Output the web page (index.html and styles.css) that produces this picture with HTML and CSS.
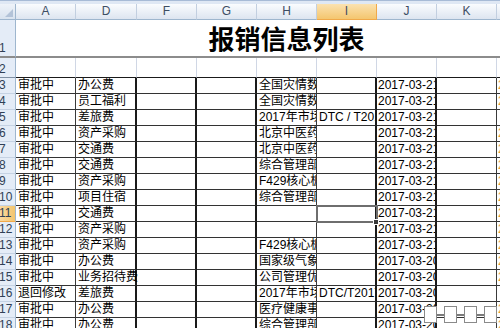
FILE: index.html
```html
<!DOCTYPE html>
<html>
<head>
<meta charset="utf-8">
<link rel="stylesheet" href="styles.css">
</head>
<body>
<div class="sheet">
  <div class="topbar"></div>
  <div class="row colhead">
    <div class="corner"><span class="tri"></span></div>
    <div class="hc">A</div><div class="hc">D</div><div class="hc">F</div><div class="hc">G</div><div class="hc">H</div><div class="hc hsel">I</div><div class="hc">J</div><div class="hc">K</div><div class="hc">L</div>
  </div>
  <div class="row r1">
    <div class="rh rhb">1</div>
    <div class="title">报销信息列表</div>
  </div>
  <div class="row r2">
    <div class="rh rhb">2</div>
    <div class="g"></div><div class="g"></div><div class="g"></div><div class="g"></div><div class="g"></div><div class="g"></div><div class="g"></div><div class="g"></div><div class="g"></div>
  </div>

  <div class="row d"><div class="rh">3</div><div class="c">审批中</div><div class="c tk">办公费</div><div class="c tk"></div><div class="c tk"></div><div class="c">全国灾情数据</div><div class="c tk"></div><div class="c tk dt">2017-03-21</div><div class="c"></div><div class="c o">2</div></div>
  <div class="row d"><div class="rh">4</div><div class="c">审批中</div><div class="c tk">员工福利</div><div class="c tk"></div><div class="c tk"></div><div class="c">全国灾情数据</div><div class="c tk"></div><div class="c tk dt">2017-03-21</div><div class="c"></div><div class="c o">2</div></div>
  <div class="row d"><div class="rh">5</div><div class="c">审批中</div><div class="c tk">差旅费</div><div class="c tk"></div><div class="c tk"></div><div class="c">2017年市场部</div><div class="c tk">DTC / T2017</div><div class="c tk dt">2017-03-21</div><div class="c"></div><div class="c o"></div></div>
  <div class="row d"><div class="rh">6</div><div class="c">审批中</div><div class="c tk">资产采购</div><div class="c tk"></div><div class="c tk"></div><div class="c">北京中医药</div><div class="c tk"></div><div class="c tk dt">2017-03-21</div><div class="c"></div><div class="c o">2</div></div>
  <div class="row d"><div class="rh">7</div><div class="c">审批中</div><div class="c tk">交通费</div><div class="c tk"></div><div class="c tk"></div><div class="c">北京中医药</div><div class="c tk"></div><div class="c tk dt">2017-03-21</div><div class="c"></div><div class="c o">2</div></div>
  <div class="row d"><div class="rh">8</div><div class="c">审批中</div><div class="c tk">交通费</div><div class="c tk"></div><div class="c tk"></div><div class="c">综合管理部</div><div class="c tk"></div><div class="c tk dt">2017-03-21</div><div class="c"></div><div class="c o">2</div></div>
  <div class="row d"><div class="rh">9</div><div class="c">审批中</div><div class="c tk">资产采购</div><div class="c tk"></div><div class="c tk"></div><div class="c">F429核心板</div><div class="c tk"></div><div class="c tk dt">2017-03-21</div><div class="c"></div><div class="c o">2</div></div>
  <div class="row d"><div class="rh">10</div><div class="c">审批中</div><div class="c tk">项目住宿</div><div class="c tk"></div><div class="c tk"></div><div class="c">综合管理部</div><div class="c tk"></div><div class="c tk dt">2017-03-21</div><div class="c"></div><div class="c o">2</div></div>
  <div class="row d"><div class="rh rsel">11</div><div class="c">审批中</div><div class="c tk">交通费</div><div class="c tk"></div><div class="c tk"></div><div class="c"></div><div class="c tk sel"></div><div class="c tk dt">2017-03-21</div><div class="c"></div><div class="c o">2</div></div>
  <div class="row d"><div class="rh">12</div><div class="c">审批中</div><div class="c tk">资产采购</div><div class="c tk"></div><div class="c tk"></div><div class="c"></div><div class="c tk"></div><div class="c tk dt">2017-03-21</div><div class="c"></div><div class="c o">2</div></div>
  <div class="row d"><div class="rh">13</div><div class="c">审批中</div><div class="c tk">资产采购</div><div class="c tk"></div><div class="c tk"></div><div class="c">F429核心板</div><div class="c tk"></div><div class="c tk dt">2017-03-21</div><div class="c"></div><div class="c o">2</div></div>
  <div class="row d"><div class="rh">14</div><div class="c">审批中</div><div class="c tk">办公费</div><div class="c tk"></div><div class="c tk"></div><div class="c">国家级气象</div><div class="c tk"></div><div class="c tk dt">2017-03-20</div><div class="c"></div><div class="c o">2</div></div>
  <div class="row d"><div class="rh">15</div><div class="c">审批中</div><div class="c tk ov">业务招待费</div><div class="c tk"></div><div class="c tk"></div><div class="c">公司管理优化</div><div class="c tk"></div><div class="c tk dt">2017-03-20</div><div class="c"></div><div class="c o">2</div></div>
  <div class="row d"><div class="rh">16</div><div class="c">退回修改</div><div class="c tk">差旅费</div><div class="c tk"></div><div class="c tk"></div><div class="c">2017年市场部</div><div class="c tk">DTC/T2017</div><div class="c tk dt">2017-03-20</div><div class="c"></div><div class="c o"></div></div>
  <div class="row d"><div class="rh">17</div><div class="c">审批中</div><div class="c tk">办公费</div><div class="c tk"></div><div class="c tk"></div><div class="c">医疗健康事业</div><div class="c tk"></div><div class="c tk dt">2017-03-20</div><div class="c"></div><div class="c o">2</div></div>
  <div class="row d"><div class="rh">18</div><div class="c">审批中</div><div class="c tk">办公费</div><div class="c tk"></div><div class="c tk"></div><div class="c">综合管理部</div><div class="c tk"></div><div class="c tk dt">2017-03-20</div><div class="c"></div><div class="c o">2</div></div>
</div>
<div class="ovl">
  <span class="sq"></span><span class="sq"></span><span class="sq"></span><span class="sq"></span>
</div>
</body>
</html>
```
FILE: styles.css
```css
html, body {
  margin: 0;
  padding: 0;
}
body {
  width: 500px;
  height: 328px;
  overflow: hidden;
  background: #fff;
  position: relative;
  font-family: "Liberation Sans", "Noto Sans CJK SC", sans-serif;
  color: #000;
}
.sheet {
  width: 557px;
}
.topbar {
  height: 4px;
  background: linear-gradient(#a7bbd6 0 1px, #dfe8f4 1px);
}
.row {
  display: grid;
  grid-template-columns: 16px 60px 61px 60px 60px 60px 60px 60px 60px 60px;
}
.row > div {
  box-sizing: border-box;
  min-width: 0;
}
.colhead {
  height: 16px;
}
.corner {
  background: linear-gradient(#eef3f9, #d9e3ef);
  border-right: 1px solid #9eb6ce;
  border-bottom: 1px solid #9eb6ce;
  position: relative;
}
.tri {
  position: absolute;
  right: 2px;
  bottom: 2px;
  width: 0;
  height: 0;
  border-left: 8px solid transparent;
  border-bottom: 8px solid #b3c3d8;
}
.hc {
  background: linear-gradient(#fafcfe, #dde5f0);
  border-right: 1px solid #c2cfe0;
  border-bottom: 1px solid #9eb6ce;
  font-size: 12px;
  line-height: 15px;
  text-align: center;
  color: #3c4d63;
}
.hc.hsel {
  background: linear-gradient(#fbe2b0, #f4c66f);
  border-right-color: #f0a94a;
  border-bottom-color: #f0a94a;
}
.rh {
  background: #e4ecf7;
  border-right: 1px solid #9eb6ce;
  border-bottom: 1px solid #c5d2e3;
  font-size: 12px;
  line-height: 15px;
  text-indent: -1px;
  color: #2f3f55;
  white-space: nowrap;
  overflow: hidden;
}
.rhb {
  display: flex;
  align-items: flex-end;
}
.rh.rsel {
  background: linear-gradient(90deg, #f9d8a0, #f3c56d);
  border-bottom-color: #f0a94a;
}
.r1 {
  height: 38px;
}
.r1 .rh {
  border-bottom: 2px solid #8c8c8c;
}
.title {
  grid-column: 2 / 11;
  border-bottom: 2px solid #8c8c8c;
  display: flex;
  align-items: center;
  justify-content: center;
  font-family: "Noto Sans CJK SC", sans-serif;
  font-weight: bold;
  font-size: 26px;
  line-height: 30px;
  padding-bottom: 1px;
}
.r2 {
  height: 20px;
}
.r2 .rh {
  border-bottom: 1px solid #7f8fa3;
}
.g {
  border-right: 1px solid #d0d7e5;
  border-bottom: 1px solid #1a1a1a;
}
.d {
  height: 16px;
}
.c {
  border-right: 1px solid #3a3a3a;
  border-bottom: 1px solid #333;
  font-size: 12px;
  line-height: 15px;
  padding-left: 2px;
  white-space: nowrap;
  overflow: hidden;
}
.c.tk {
  border-right: 2px solid #1a1a1a;
}
.c.dt {
  padding-left: 1px;
}
.c.ov {
  overflow: visible;
}
.c.o {
  color: #e8962c;
  border-right: none;
  padding-left: 1px;
}
.c.sel {
  position: relative;
  overflow: visible;
  outline: 2px solid #6e6e6e;
  outline-offset: -1px;
  z-index: 2;
}
.c.sel::after {
  content: "";
  position: absolute;
  right: -4px;
  bottom: -4px;
  width: 4px;
  height: 4px;
  background: #3a3a3a;
  border: 1px solid #fff;
}
.ovl {
  position: absolute;
  left: 424px;
  top: 306px;
  display: flex;
  gap: 7px;
}
.ovl::before {
  content: "";
  position: absolute;
  left: 10px;
  right: 4px;
  top: 8px;
  height: 2px;
  background: #7a7a7a;
}
.sq {
  position: relative;
  width: 13px;
  height: 17px;
  box-sizing: border-box;
  background: #fff;
  border: 1px solid #8a8a8a;
}
```
